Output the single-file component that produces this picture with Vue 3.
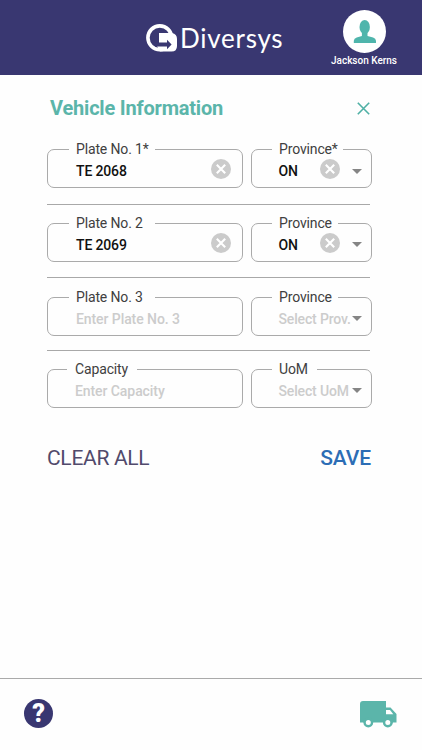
<script setup>
const rows = [
  {
    id: 'plate1', height: 56,
    main: { label: 'Plate No. 1*', value: 'TE 2068', gap: 86 },
    side: { label: 'Province*', value: 'ON', gap: 71 },
  },
  {
    id: 'plate2', height: 55,
    main: { label: 'Plate No. 2', value: 'TE 2069', gap: 86 },
    side: { label: 'Province', value: 'ON', gap: 66 },
  },
  {
    id: 'plate3', height: 54,
    main: { label: 'Plate No. 3', placeholder: 'Enter Plate No. 3', gap: 86 },
    side: { label: 'Province', placeholder: 'Select Prov.', gap: 66 },
  },
  {
    id: 'capacity', height: 40,
    main: { label: 'Capacity', placeholder: 'Enter Capacity', gap: 70 },
    side: { label: 'UoM', placeholder: 'Select UoM', gap: 45 },
  },
]
</script>

<template>
  <div class="screen">
    <header class="header">
      <div class="brand">
        <svg class="brand-mark" width="32" height="28" viewBox="0 0 32 28">
          <circle cx="13.800" cy="13.800" r="11.900" fill="none" stroke="#fff" stroke-width="3.600" />
          <path d="M13 9h13q5 1 5 6v7q0 5.500-5.500 5.500H14L11 22h2z" fill="#fff" />
          <path d="M9 18.600h12v-2.800l4.600 4.700-4.600 4.700v-2.600H9z" fill="#393771" />
        </svg>
        <span class="brand-name">Diversys</span>
      </div>
      <div class="user">
        <svg width="43" height="43" viewBox="0 0 43 43">
          <circle cx="21.500" cy="21.500" r="21.500" fill="#fff" />
          <ellipse cx="21.700" cy="17" rx="5.200" ry="7" fill="#4fb5ac" />
          <path d="M18.900 21h5.600v5l5.600 1.400q2.700.8 2.900 3.300v2.300H10.800v-2.300q.2-2.500 2.900-3.300l5.200-1.400z" fill="#4fb5ac" />
        </svg>
        <span class="user-name">Jackson Kerns</span>
      </div>
    </header>

    <main class="content">
      <div class="title-row">
        <h1>Vehicle Information</h1>
        <svg class="close" width="13" height="13" viewBox="0 0 13 13">
          <path d="M.8.800l11.400 11.400M12.200.800L.8 12.200" stroke="#4fb0a5" stroke-width="1.600" />
        </svg>
      </div>

      <div v-for="row in rows" :key="row.id" class="row" :class="row.id" :style="{ height: row.height + 'px' }">
        <div class="fields">
          <div v-for="(field, kind) in { main: row.main, side: row.side }" :key="kind" class="field" :class="kind">
            <span class="label" :style="{ width: field.gap + 'px' }">{{ field.label }}</span>
            <span class="value" :class="{ placeholder: !field.value }">{{ field.value || field.placeholder }}</span>
            <svg v-if="field.value" class="clear" width="20" height="20" viewBox="0 0 20 20">
              <circle cx="10" cy="10" r="10" fill="#cbcbcb" />
              <path d="M5.800 5.800l8.400 8.400M14.200 5.800l-8.400 8.400" stroke="#fff" stroke-width="2.100" />
            </svg>
            <svg v-if="kind === 'side'" class="caret" width="10" height="5" viewBox="0 0 10 5">
              <path d="M0 0h10L5 5z" fill="#858585" />
            </svg>
          </div>
        </div>
      </div>

      <div class="actions">
        <span class="clear-all">CLEAR ALL</span>
        <span class="save">SAVE</span>
      </div>
    </main>

    <footer class="footer">
      <span class="help">?</span>
      <svg class="truck" width="37" height="27" viewBox="0 0 37 27">
        <path d="M3 0h23v6.500h4.500L36.500 13v8.500h-3.700a5 5 0 0 1-9.600 0h-10a5 5 0 0 1-9.600 0H0V3q0-3 3-3z" fill="#5bb5aa" />
        <path d="M26 9h4l3.300 4.200H26z" fill="#fff" />
        <circle cx="8.300" cy="21.500" r="3.700" fill="#fff" stroke="#5bb5aa" stroke-width="2.400" />
        <circle cx="27.800" cy="21.500" r="3.700" fill="#fff" stroke="#5bb5aa" stroke-width="2.400" />
      </svg>
    </footer>
  </div>
</template>

<style>
body {
  margin: 0;
  background: #fefefe;
}
</style>

<style scoped>
.screen {
  box-sizing: border-box;
  width: 422px;
  height: 750px;
  display: flex;
  flex-direction: column;
  overflow: hidden;
  background: #fefefe;
  font-family: Roboto, sans-serif;
}
.header {
  box-sizing: border-box;
  height: 75px;
  flex: none;
  display: flex;
  justify-content: space-between;
  padding: 10px 19px 0 146px;
  background: #393771;
  color: #fff;
}
.brand {
  display: flex;
  align-items: flex-start;
  gap: 2px;
  padding-top: 14px;
}
.brand-name {
  font: 26px/30px Lato, sans-serif;
  letter-spacing: 0.75px;
  margin-top: -1px;
}
.user {
  width: 78px;
  display: flex;
  flex-direction: column;
  align-items: center;
}
.user-name {
  margin-top: 2px;
  font-size: 10px;
  font-weight: 500;
  line-height: 12px;
  white-space: nowrap;
}
.content {
  flex: 1;
  padding: 20px 50px 0 47px;
}
.title-row {
  display: flex;
  justify-content: space-between;
  align-items: center;
  height: 27px;
  padding: 0 2px 0 3px;
  margin-bottom: 27px;
}
h1 {
  margin: 0;
  font-size: 20px;
  line-height: 27px;
  font-weight: 700;
  letter-spacing: -0.2px;
  color: #5bb5aa;
}
.row {
  box-sizing: border-box;
  margin-bottom: 18px;
  border-bottom: 1px solid #a8a8a8;
  width: 323px;
}
.row.plate2 {
  margin-bottom: 19px;
}
.row.capacity {
  border-bottom: 0;
  margin-bottom: 0;
}
.fields {
  display: flex;
  gap: 8px;
  width: 325px;
}
.field {
  position: relative;
  box-sizing: border-box;
  height: 39px;
  display: flex;
  align-items: center;
  border: 1px solid #aaa;
  border-radius: 7px;
  padding: 5px 11px 0 28px;
}
.main {
  width: 196px;
}
.side {
  width: 121px;
  padding: 5px 9px 0 27px;
}
.label {
  position: absolute;
  box-sizing: border-box;
  left: 21px;
  top: -9px;
  padding-left: 7px;
  background: #fefefe;
  color: #404040;
  font-size: 14px;
  line-height: 17px;
  letter-spacing: -0.14px;
  white-space: nowrap;
}
.side .label {
  left: 20px;
}
.capacity .main {
  padding-left: 27px;
}
.capacity .main .label {
  left: 19px;
  padding-left: 8px;
}
.value {
  color: #111;
  font-size: 14px;
  font-weight: 500;
  line-height: 18px;
  letter-spacing: -0.15px;
  white-space: nowrap;
}
.side .value {
  margin-left: -0.5px;
}
.plate2 .value {
  margin-top: -1px;
}
.placeholder {
  color: #ccc;
  letter-spacing: -0.08px;
}
.side .placeholder {
  flex: 1;
  width: 0;
  letter-spacing: -0.15px;
}
.clear {
  flex: none;
  margin: -4px 0 0 auto;
}
.plate2 .clear {
  margin-top: -5px;
}
.side .clear {
  margin-right: 12px;
}
.caret {
  flex: none;
  margin-top: 1px;
}
.plate2 .caret {
  margin-top: -1px;
}
.plate3 .caret,
.capacity .caret {
  margin-top: -1px;
}
.actions {
  display: flex;
  justify-content: space-between;
  align-items: center;
  margin-top: 36px;
  width: 324px;
  font-size: 21px;
  line-height: 26px;
}
.clear-all {
  color: #514a6c;
  letter-spacing: -0.3px;
}
.save {
  color: #2c6db5;
  font-weight: 500;
  letter-spacing: -0.1px;
}
.footer {
  box-sizing: border-box;
  height: 72px;
  flex: none;
  display: flex;
  justify-content: space-between;
  align-items: flex-start;
  padding: 20px 25px 0 24px;
  border-top: 1px solid #aaa;
}
.help {
  width: 29px;
  height: 29px;
  border-radius: 50%;
  background: #393771;
  color: #fff;
  font: 900 25px/29px Roboto, sans-serif;
  text-align: center;
}
.truck {
  margin-top: 2px;
}
</style>
